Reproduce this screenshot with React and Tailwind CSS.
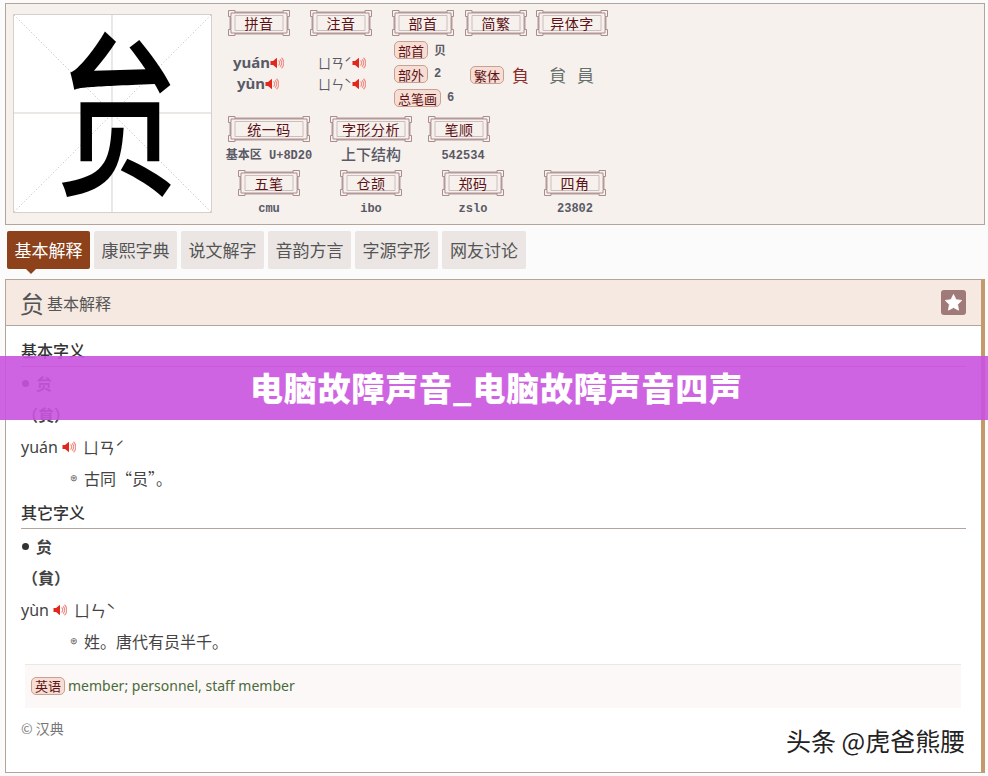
const CJK = "font-['Noto_Sans_CJK_SC','Liberation_Sans',sans-serif]";
const MONO = "font-['Liberation_Mono','Noto_Sans_CJK_SC',monospace]";

function Speaker({ className = "" }) {
  return (
    <svg viewBox="0 0 14 14" width="14" height="14" className={`shrink-0 ${className}`}>
      <path d="M0.5 5h2.5L7 1.8v10.4L3 9H0.5z" fill="#e0281c" />
      <path d="M8.5 4.6a3 3 0 0 1 0 4.8M10 3.2a5 5 0 0 1 0 7.6M11.5 1.8a7 7 0 0 1 0 10.4" fill="none" stroke="#ee8f88" strokeWidth="1.2" />
    </svg>
  );
}

function Corner({ x, y, flipX, flipY }) {
  return (
    <g transform={`translate(${x} ${y}) scale(${flipX ? -1 : 1} ${flipY ? -1 : 1})`} fill="none" stroke="#a98c8c" strokeWidth="1">
      <path d="M0.5 0.5h6.5v2.5h-4v3.5h-2.5z" />
    </g>
  );
}

// label frame with the meander corners
function Frame({ w, label }) {
  const h = 26;
  return (
    <div className={`relative flex h-[26px] shrink-0 items-center justify-center text-[14px] tracking-[0.5px] text-[#5c1216] ${CJK}`} style={{ width: w }}>
      <svg width={w} height={h} className="absolute inset-0">
        <path d={`M7 2.5H${w - 7}M7 ${h - 2.5}H${w - 7}M2.5 7V${h - 7}M${w - 2.5} 7V${h - 7}`} stroke="#b39a9a" strokeWidth="2" fill="none" />
        <path d={`M7 5.5H${w - 7}V${h - 5.5}H7z`} stroke="#cdbcbc" strokeWidth="1" fill="none" />
        <Corner x={0} y={0} />
        <Corner x={w} y={0} flipX />
        <Corner x={0} y={h} flipY />
        <Corner x={w} y={h} flipX flipY />
      </svg>
      <span className="relative leading-none">{label}</span>
    </div>
  );
}

function Tag({ children, className = "" }) {
  return (
    <span className={`inline-flex h-[18px] items-center rounded-[5px] border border-[#c9a092] bg-[#f7ded4] px-[3px] text-[13px] leading-none text-[#5c1216] ${CJK} ${className}`}>
      {children}
    </span>
  );
}

function Value({ w, children, className = "" }) {
  return (
    <div className={`shrink-0 whitespace-nowrap text-center font-bold text-[#5a5a66] ${className}`} style={{ width: w }}>
      {children}
    </div>
  );
}

function CharBox() {
  return (
    <div className="relative flex h-[199px] w-[199px] shrink-0 items-center justify-center border border-[#d6cfcb] bg-white pl-[10px]">
      <svg viewBox="0 0 199 199" className="absolute inset-0 h-full w-full">
        <path d="M0 0L199 199M199 0L0 199" stroke="#cfcac6" strokeWidth="1" strokeDasharray="1.5 2" />
        <path d="M99 0V199M0 99H199" stroke="#d6cfcb" strokeWidth="1" />
      </svg>
      <span className={`relative -translate-y-[9px] scale-x-[0.68] text-[178px] font-medium leading-none text-black ${CJK}`}>贠</span>
    </div>
  );
}

function TopPanel() {
  return (
    <div className="ml-[5px] mr-[3px] mt-[3px] flex h-[222px] border border-[#b3a59c] bg-[#f6f1ed] pl-[7px]">
      <div className="pt-[10px]">
        <CharBox />
      </div>
      <div className="ml-[16px] flex flex-col pt-[6px]">
        <div className="flex">
          <Frame w={62} label="拼音" />
          <div className="w-5" />
          <Frame w={62} label="注音" />
          <div className="w-5" />
          <Frame w={62} label="部首" />
          <div className="w-[11px]" />
          <Frame w={62} label="简繁" />
          <div className="w-[9px]" />
          <Frame w={72} label="异体字" />
        </div>
        <div className="flex h-[80px]">
          <div className="w-[56px] shrink-0 pt-[16px] text-right font-['Noto_Sans',sans-serif] text-[15px] font-bold leading-[21px] text-[#5a5a66]">
            <div className="flex items-center justify-end">yuán<Speaker /></div>
            <div className="flex items-center justify-end pr-[5px]">yùn<Speaker /></div>
          </div>
          <div className={`ml-[34px] w-[48px] shrink-0 whitespace-nowrap pt-[16px] text-[13px] leading-[21px] text-[#5a5a66] ${CJK}`}>
            <div className="flex items-center">ㄩㄢˊ<Speaker /></div>
            <div className="flex items-center">ㄩㄣˋ<Speaker /></div>
          </div>
          <div className="ml-[28px] flex w-[76px] shrink-0 flex-col gap-[6px] pt-[5px]">
            <div className="flex items-center gap-[6px]"><Tag>部首</Tag><span className={`text-[12px] font-bold text-[#5a5a66] ${CJK}`}>贝</span></div>
            <div className="flex items-center gap-[6px]"><Tag>部外</Tag><span className={`text-[12px] font-bold text-[#5a5a66] ${MONO}`}>2</span></div>
            <div className="flex items-center gap-[6px]"><Tag>总笔画</Tag><span className={`text-[12px] font-bold text-[#5a5a66] ${MONO}`}>6</span></div>
          </div>
          <div className={`flex items-center pb-[2px] text-[17px] ${CJK}`}>
            <Tag>繁体</Tag>
            <span className="ml-[8px] w-[37px] text-[#8a2a2a]">負</span>
            <span className="w-[28px] text-[#66706a]">貟</span>
            <span className="text-[#66706a]">員</span>
          </div>
        </div>
        <div className="flex">
          <Frame w={82} label="统一码" />
          <div className="w-5" />
          <Frame w={82} label="字形分析" />
          <div className="w-4" />
          <Frame w={62} label="笔顺" />
        </div>
        <div className="-ml-[4px] flex h-[28px] items-center">
          <Value w={90} className={`text-[12px] ${MONO}`}>基本区 U+8D20</Value>
          <Value w={114} className={`pb-[4px] text-[15px] font-medium ${CJK}`}>上下结构</Value>
          <Value w={70} className={`text-[12px] ${MONO}`}>542534</Value>
        </div>
        <div className="ml-[10px] flex">
          <Frame w={62} label="五笔" />
          <div className="w-10" />
          <Frame w={62} label="仓颉" />
          <div className="w-10" />
          <Frame w={62} label="郑码" />
          <div className="w-10" />
          <Frame w={62} label="四角" />
        </div>
        <div className={`ml-[10px] flex h-[26px] items-center text-[12px] ${MONO}`}>
          <Value w={62}>cmu</Value>
          <div className="w-10" />
          <Value w={62}>ibo</Value>
          <div className="w-10" />
          <Value w={62}>zslo</Value>
          <div className="w-10" />
          <Value w={62}>23802</Value>
        </div>
      </div>
    </div>
  );
}

const TABS = ["基本解释", "康熙字典", "说文解字", "音韵方言", "字源字形", "网友讨论"];

function Tabs() {
  return (
    <div className={`ml-[7px] mt-[6px] flex gap-1 ${CJK}`}>
      {TABS.map((t, i) => (
        <div
          key={t}
          className={`relative flex h-[38px] items-center justify-center rounded-[2px] text-[17px] ${i === 5 ? "w-[84px]" : "w-[83px]"} ${i === 0 ? "bg-[#8d421c] text-white" : "bg-[#ebe6e4] text-[#555]"}`}
        >
          {t}
          {i === 0 && <span className="absolute left-[19px] top-full h-0 w-0 border-x-[5px] border-t-[5px] border-x-transparent border-t-[#8d421c]" />}
        </div>
      ))}
    </div>
  );
}

function Heading({ children }) {
  return (
    <div className="flex h-[33px] items-end border-b border-[#b3a59c] pb-[8px] text-[16px] font-medium leading-none text-[#333]">
      {children}
    </div>
  );
}

function Row({ children, className = "" }) {
  return <div className={`flex items-center whitespace-nowrap text-[16px] text-[#444] ${className}`}>{children}</div>;
}

function Detail() {
  return (
    <div className={`ml-[5px] mr-[3px] mt-[10px] h-[494px] border border-r-4 border-[#b3a59c] border-r-[#c49a6c] bg-white ${CJK}`}>
      <div className="flex h-[46px] items-center border-b border-[#b3a59c] bg-[#f6e9e1] pl-[14px] pr-[15px]">
        <span className="text-[24px] leading-none text-[#555]">贠</span>
        <span className="ml-[3px] mt-[1px] text-[16px] text-[#555]">基本解释</span>
        <div className="ml-auto flex h-[25px] w-[25px] items-center justify-center rounded-[3px] bg-[#a07a78]">
          <svg viewBox="0 0 24 24" width="19" height="19" fill="#fff">
            <path d="M12 1.8l3.2 6.6 7.2 1-5.2 5.1 1.2 7.2L12 18.3l-6.4 3.4 1.2-7.2L1.6 9.4l7.2-1z" stroke="#fff" strokeLinejoin="round" />
          </svg>
        </div>
      </div>
      <div className="px-[15px]">
        <div className="mt-[8px]"><Heading>基本字义</Heading></div>
        <Row className="mt-[5px] h-[24px] pb-[2px] font-bold"><span className="ml-[1px] mr-[7px] h-[7px] w-[7px] rounded-full bg-[#333]" />贠</Row>
        <Row className="mt-[7px] h-[24px] pb-[2px] pl-[1px] font-bold">（貟）</Row>
        <Row className="mt-[7px] h-[24px] pt-[2px]">
          <span className="font-['Noto_Sans',sans-serif] text-[#444]">yuán</span>
          <Speaker className="ml-[4px] mr-[7px]" />
          ㄩㄢˊ
        </Row>
        <Row className="mt-[9px] h-[24px] pb-[2px] pl-[49px]"><span className="mr-[6px] text-[9px] text-[#555]">⊛</span>古同“员”。</Row>
        <div className="mt-[5px]"><Heading>其它字义</Heading></div>
        <Row className="mt-[6px] h-[24px] pb-[2px] font-bold"><span className="ml-[1px] mr-[7px] h-[7px] w-[7px] rounded-full bg-[#333]" />贠</Row>
        <Row className="mt-[7px] h-[24px] pb-[2px] pl-[1px] font-bold">（貟）</Row>
        <Row className="mt-[8px] h-[24px]">
          <span className="font-['Noto_Sans',sans-serif] text-[#444]">yùn</span>
          <Speaker className="ml-[4px] mr-[7px]" />
          ㄩㄣˋ
        </Row>
        <Row className="mt-[9px] h-[24px] pb-[4px] pl-[49px]"><span className="mr-[6px] text-[9px] text-[#555]">⊛</span>姓。唐代有员半千。</Row>
        <div className="ml-[4px] mr-[5px] mt-[9px] flex h-[44px] items-center border-t border-[#eee6e3] bg-[#fcf8f7] pb-[2px] pl-[6px] text-[14px] text-[#4a6a3a]">
          <Tag className="mr-[3px]">英语</Tag>
          <span className="font-['Noto_Sans',sans-serif]">member; personnel, staff member</span>
        </div>
        <div className="mt-[10px] text-[14px] leading-[20px] text-[#777]">© 汉典</div>
      </div>
    </div>
  );
}

export default function App() {
  return (
    <div className="relative h-[776px] w-[988px] overflow-hidden bg-[#fbfbfc]">
      <TopPanel />
      <Tabs />
      <Detail />
      {/* title band across the page */}
      <div className={`absolute inset-x-0 top-[356px] flex h-[64px] items-center justify-center bg-[#ca53df]/90 pl-[5px] text-[33px] font-black tracking-[0.8px] text-white ${CJK}`}>
        电脑故障声音_电脑故障声音四声
      </div>
      {/* watermark */}
      <div className={`absolute left-[786px] top-[723px] text-[25px] leading-[34px] text-[#222] [text-shadow:1px_1px_0_#fff,-1px_-1px_0_#fff,1px_-1px_0_#fff,-1px_1px_0_#fff] ${CJK}`}>
        头条 @虎爸熊腰
      </div>
    </div>
  );
}
